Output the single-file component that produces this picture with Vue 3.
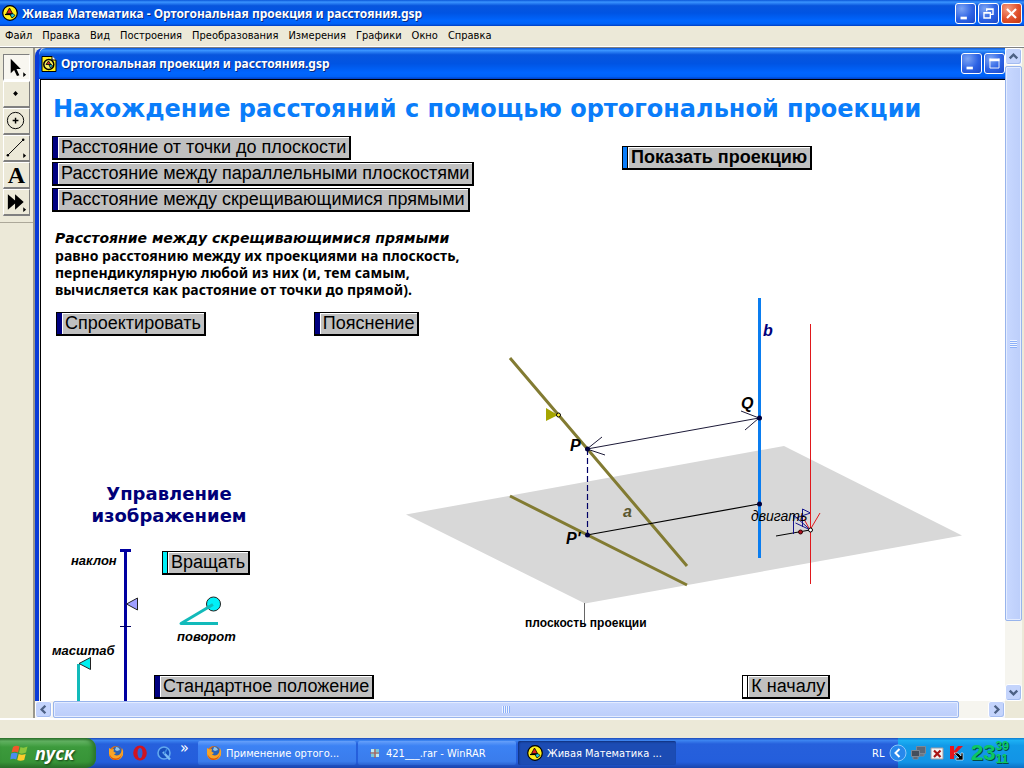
<script setup>
import { ref } from 'vue'

const title = 'Ортогональная проекция и расстояния.gsp'

const menu = ['Файл', 'Правка', 'Вид', 'Построения', 'Преобразования', 'Измерения', 'Графики', 'Окно', 'Справка']

const tools = [
  { id: 'arrow', label: 'Стрелка', more: true },
  { id: 'point', label: 'Точка' },
  { id: 'circle', label: 'Окружность' },
  { id: 'line', label: 'Отрезок', more: true },
  { id: 'text', label: 'Текст' },
  { id: 'custom', label: 'Инструменты', more: true },
]
const activeTool = ref('arrow')

const distances = [
  'Расстояние от точки до плоскости',
  'Расстояние между параллельными плоскостями',
  'Расстояние между скрещивающимися прямыми',
]

const tasks = [
  { id: 'firefox', label: 'Применение ортого...' },
  { id: 'rar', label: '421___.rar - WinRAR' },
  { id: 'math', label: 'Живая Математика ...' },
]
const activeTask = ref('math')
</script>

<template>
  <div class="screen">
    <svg class="defs" width="0" height="0" aria-hidden="true">
      <symbol id="math" viewBox="0 0 16 16">
        <circle cx="8" cy="8" r="7.3" fill="#ffef1c" stroke="#000" stroke-width="1.2" />
        <path d="M7.500 3 10.500 8.500H4.500Z" fill="#e02020" stroke="#000" stroke-width=".8" />
        <path d="M3 9.500H9" stroke="#000" stroke-width="1.200" />
        <path d="M8 9.500 11 8.500l2 2-3 2.500Z" fill="#20c8d8" stroke="#000" stroke-width=".8" />
      </symbol>
      <symbol id="firefox" viewBox="0 0 16 16">
        <circle cx="8" cy="8" r="7" fill="#e8720c" />
        <circle cx="9" cy="6" r="4.6" fill="#2a62b4" />
        <path d="M8 2q3 0 4 3l-3 1-2-1Z" fill="#8fc4ee" />
        <path d="M1 3 3.500 4.500 6 4 5.500 6.500 8 8 6 9.500q2 2 5 .5 3-2 3-7 2 3 1 7-2 5-7 5-6 0-7-6Z" fill="#f7a428" />
        <path d="M1.500 9q2 5 7 4.500 4-.5 5.500-5-1 6-6.500 6.500-5 0-6-6Z" fill="#d8520a" />
      </symbol>
    </svg>

    <header class="titlebar">
      <svg class="icon16"><use href="#math" /></svg>
      <span class="caption">Живая Математика - {{ title }}</span>
      <button class="winbtn" aria-label="Свернуть">
        <svg viewBox="0 0 21 21"><path d="M5 15.500h7" stroke="#fff" stroke-width="3" /></svg>
      </button>
      <button class="winbtn" aria-label="Восстановить">
        <svg viewBox="0 0 21 21"><path d="M8.500 8V5.500h7v6H13M8 6h8M5.500 9.500h7v6h-7ZM5 10h8" fill="none" stroke="#fff" stroke-width="1.500" /></svg>
      </button>
      <button class="winbtn close" aria-label="Закрыть">
        <svg viewBox="0 0 21 21"><path d="m5.500 5.500 10 10m0-10-10 10" stroke="#fff" stroke-width="2.400" /></svg>
      </button>
    </header>

    <nav class="menubar">
      <button v-for="item in menu" :key="item">{{ item }}</button>
    </nav>

    <main class="workspace">
      <aside class="palette">
        <div class="tools">
          <button v-for="tool in tools" :key="tool.id" :class="{ active: activeTool === tool.id }" :aria-label="tool.label" @click="activeTool = tool.id">
            <span v-if="tool.id === 'text'" class="letter">A</span>
            <svg v-else viewBox="0 0 26 25">
              <path v-if="tool.id === 'arrow'" d="M7 4v15l3.500-3.500 3 6.500 2.500-1-3-6.500h4.500Z" />
              <path v-else-if="tool.id === 'point'" d="m12 9.500 2.500 2.500-2.500 2.500L9.500 12Z" />
              <g v-else-if="tool.id === 'circle'">
                <circle cx="12" cy="12" r="8.500" fill="none" stroke="#000" />
                <path d="M12 9v6m-3-3h6" stroke="#000" stroke-width="1.500" />
              </g>
              <g v-else-if="tool.id === 'line'">
                <path d="M4 20 20 4" stroke="#000" />
                <circle cx="4" cy="20" r="1.300" /><circle cx="20" cy="4" r="1.300" />
              </g>
              <path v-else d="M4 4.500 11.500 11V4.500L20.500 12.500 11.500 20.500V14L4 20.500Z" />
              <path v-if="tool.more" d="M20 18v5l3-2.500Z" />
            </svg>
          </button>
        </div>
      </aside>

      <section class="document">
        <header class="doc-title">
          <svg class="icon16" viewBox="0 0 16 16">
            <path d="M1 .5h10l4 4v11H1Z" fill="#ffef1c" stroke="#000" />
            <path d="M11 0v4h4" fill="#fff" stroke="#000" />
            <circle cx="7.800" cy="8.500" r="5" fill="#f8f060" stroke="#000" stroke-width="1.500" />
            <path d="m7.500 5 2.500 3.500h-5Z" fill="#c33" stroke="#000" stroke-width=".8" />
            <path d="m8 9 2.500-.5 1 1.500L9.500 12Z" fill="#20c8d8" stroke="#000" stroke-width=".8" />
          </svg>
          <span class="caption">{{ title }}</span>
          <button class="winbtn" aria-label="Свернуть документ">
            <svg viewBox="0 0 21 21"><path d="M5 15.500h7" stroke="#fff" stroke-width="3" /></svg>
          </button>
          <button class="winbtn" aria-label="Развернуть документ">
            <svg viewBox="0 0 21 21"><path d="M5.500 5v10.500h10V5" fill="none" stroke="#fff" /><path d="M5 6.500h11" stroke="#fff" stroke-width="3" /></svg>
          </button>
        </header>

        <div class="canvas">
          <svg class="drawing" width="964" height="621" viewBox="41 80 964 621">
            <path d="M406 514.500 784 446 962 535.500 585 603.500Z" fill="#d8d8d8" />
            <path d="M584.500 603v23" stroke="#666" />
            <path d="m510 358 177 208M510 496l177 89" stroke="#827b32" stroke-width="3" />
            <path d="m587 535 172-31" stroke="#000" stroke-width="1.200" />
            <path d="M587.500 449v86" stroke="#000066" stroke-width="1.200" stroke-dasharray="6 3" />
            <path d="M759.500 298v260" stroke="#0a7df0" stroke-width="3" />
            <path d="m587 449 172-31M602 437l-15 12 18 6M741 411l18 7-14 12" fill="none" stroke="#1c1a38" />
            <path d="m776 536 34-6" stroke="#000" />
            <path d="m793.500 534v-19l17 15-15-7M802.500 527v-18l8 4-15 5" fill="none" stroke="#15158c" />
            <path d="M810.500 324v260M804 519l6 11 10-17" fill="none" stroke="#e0181c" />
            <path d="m546 408v13l12-6Z" fill="#a5a500" />
            <circle cx="558.500" cy="415" r="2" fill="#ffee30" stroke="#000" />
            <g fill="#00003c">
              <circle cx="587.500" cy="449" r="2.500" />
              <circle cx="587.500" cy="535" r="2.500" />
              <circle cx="759.500" cy="418" r="2.500" />
              <circle cx="759.500" cy="504" r="2.500" />
            </g>
            <circle cx="800.500" cy="532" r="2" fill="#b01020" stroke="#300" />
            <circle cx="810.500" cy="530" r="2" fill="#fff" stroke="#000" />
            <g class="point">
              <text x="570" y="451">P</text>
              <text x="566" y="544">P'</text>
              <text x="741" y="409">Q</text>
              <text x="763" y="336" fill="#00007c">b</text>
              <text x="623" y="517" fill="#5b5730">a</text>
            </g>
            <text x="751" y="521" class="move">двигать</text>
            <text x="525" y="627" class="plane">плоскость проекции</text>

            <path d="M125.500 549v152" stroke="#0000a0" stroke-width="3" />
            <path d="M120 550.500h11" stroke="#0000a0" stroke-width="3" />
            <path d="M120 626.500h11" stroke="#000060" />
            <path d="m126.500 604 11-6v12Z" fill="#a0a0ff" stroke="#222" />
            <path d="M78.500 664v37" stroke="#12baba" stroke-width="3" />
            <path d="m79 663.500 11.500-6v12Z" fill="#00f0f0" stroke="#222" />
            <circle cx="213.500" cy="604" r="7" fill="#00f0f8" stroke="#222" />
            <path d="m213 604.500-32 19h37" fill="none" stroke="#12baba" stroke-width="3" stroke-linejoin="round" />
            <text x="71" y="565" class="small">наклон</text>
            <text x="52" y="655" class="small">масштаб</text>
            <text x="177" y="641" class="small">поворот</text>
          </svg>

          <h1>Нахождение расстояний с помощью ортогональной проекции</h1>
          <div class="actions">
            <div class="distances">
              <button v-for="item in distances" :key="item" class="sketch-btn"><span>{{ item }}</span></button>
            </div>
            <button class="sketch-btn blue bold"><span>Показать проекцию</span></button>
          </div>
          <p class="theory">
            <em>Расстояние между скрещивающимися прямыми</em><br>
            равно расстоянию между их проекциями на плоскость,<br>
            перпендикулярную любой из них (и, тем самым,<br>
            вычисляется как растояние от точки до прямой).
          </p>
          <div class="explain">
            <button class="sketch-btn"><span>Спроектировать</span></button>
            <button class="sketch-btn"><span>Пояснение</span></button>
          </div>
          <h2>Управление<br>изображением</h2>
          <button class="sketch-btn cyan rotate"><span>Вращать</span></button>
          <div class="position">
            <button class="sketch-btn"><span>Стандартное положение</span></button>
            <button class="sketch-btn white"><span>К началу</span></button>
          </div>
        </div>
      </section>

      <div class="scroll vertical">
        <button aria-label="Вверх"><svg viewBox="0 0 16 16"><path d="m4 10 4-4 4 4" /></svg></button>
        <div class="track"><div class="thumb"><i></i></div></div>
        <button aria-label="Вниз"><svg viewBox="0 0 16 16"><path d="m4 6 4 4 4-4" /></svg></button>
      </div>
      <div class="scroll horizontal">
        <button aria-label="Влево"><svg viewBox="0 0 16 16"><path d="M10 4 6 8l4 4" /></svg></button>
        <div class="track"><div class="thumb"><i></i></div></div>
        <button aria-label="Вправо"><svg viewBox="0 0 16 16"><path d="m6 4 4 4-4 4" /></svg></button>
      </div>
    </main>

    <div class="statusbar"></div>

    <footer class="taskbar">
      <button class="start">
        <svg viewBox="0 0 20 18">
          <path d="M3 3q3-2 6.500-.5L8 8.500Q5 7 1.500 8.500Z" fill="#f0582a" />
          <path d="M10.500 3q3 1.500 7-.5L16 8.500q-4 2-7 .5Z" fill="#8cc63c" />
          <path d="M1.200 9.500q3-1.500 6.500 0l-1.500 6q-3-1.500-6 0Z" fill="#4a8cf0" />
          <path d="M8.700 10q3 1.500 7 0l-1.500 6q-4 1.500-7 0Z" fill="#fccc2c" />
        </svg>
        <span>пуск</span>
      </button>
      <div class="quick">
        <button aria-label="Firefox"><svg class="icon16"><use href="#firefox" /></svg></button>
        <button aria-label="Opera">
          <svg class="icon16" viewBox="0 0 16 16">
            <ellipse cx="8" cy="8" rx="6.800" ry="7.500" fill="#d01420" />
            <ellipse cx="8" cy="8" rx="2.500" ry="5.300" fill="#2e62d6" />
          </svg>
        </button>
        <button aria-label="QuickTime">
          <svg class="icon16" viewBox="0 0 16 16">
            <circle cx="8" cy="8" r="6" fill="#164fbe" stroke="#62a8ee" stroke-width="1.600" />
            <path d="m7 7 7 7.500" stroke="#7cbcf4" stroke-width="2.400" />
            <path d="m8 9 3-5" stroke="#3c86e0" stroke-width="1.500" />
          </svg>
        </button>
        <button class="more" aria-label="Ещё">»</button>
      </div>
      <div class="tasks">
        <button v-for="task in tasks" :key="task.id" :class="{ active: activeTask === task.id }" @click="activeTask = task.id">
          <svg v-if="task.id !== 'rar'" class="icon16"><use :href="'#' + task.id" /></svg>
          <svg v-else class="icon16" viewBox="0 0 16 16">
            <path d="M5 4h8v8H5Z" fill="#7cc8d8" />
            <path d="M5 4h3v3H5ZM10 9h3v3h-3Z" fill="#c0e8f0" />
            <path d="M4 8h9M9 4v9" stroke="#b4584c" stroke-width="1.200" />
          </svg>
          <span>{{ task.label }}</span>
        </button>
      </div>
      <button class="lang">RL</button>
      <div class="tray">
        <button class="expand" aria-label="Показать значки">
          <svg viewBox="0 0 18 18">
            <circle cx="9" cy="9" r="8" fill="#2888ec" stroke="#8cc8fa" />
            <path d="M10.500 5 6.500 9l4 4" fill="none" stroke="#fff" stroke-width="2" />
          </svg>
        </button>
        <svg class="icon16" viewBox="0 0 16 16">
          <path d="M6.500 1.500h9v7h-9ZM9 9h5v2H9Z" fill="#5c6878" stroke="#7c8896" />
          <path d="M1.500 5.500h8v6h-8ZM3 12h5v2H3Z" fill="#444e5c" stroke="#7c8896" />
        </svg>
        <svg class="icon16" viewBox="0 0 16 16">
          <path d="M2 3h12v11H2Z" fill="#f4f4f4" stroke="#9a9aa4" />
          <path d="m5 5.500 6.500 6.500m0-6.500L5 12" stroke="#a81414" stroke-width="2.200" />
        </svg>
        <svg class="icon16" viewBox="0 0 16 16">
          <path d="M2 1h4v5l4-5h5L8 8l3 3-5-1v4H2Z" fill="#e8141c" />
          <path d="M6 8h4l3 3V8h2v7H8v-2h3Z" fill="#000" stroke="#fff" stroke-width=".6" />
        </svg>
        <time class="clock"><span>23</span><span class="minutes"><span>39</span><span>11</span></span></time>
      </div>
    </footer>
  </div>
</template>

<style>
body {
  overflow: hidden;
  background: #ece9d8;
}
</style>

<style scoped>
.screen {
  display: flex;
  flex-direction: column;
  height: 100vh;
  font-family: "DejaVu Sans Condensed", "DejaVu Sans", sans-serif;
  font-size: 11px;
  color: #000;
}

.defs {
  position: absolute;
}

button {
  padding: 0;
  border: 0;
  background: none;
  font: inherit;
  color: inherit;
}

.icon16 {
  width: 16px;
  height: 16px;
  flex: none;
}

.titlebar,
.doc-title {
  display: flex;
  align-items: center;
  gap: 2px;
  color: #fff;
  background: linear-gradient(#0a56d8 0%, #3a94ff 8%, #0855dd 22%, #0054e3 50%, #0066ff 80%, #0062f6 92%, #003dc0 100%);
}

.titlebar {
  height: 26px;
  padding: 0 2px;
}

.doc-title {
  height: 31px;
  padding-left: 2px;
  border-top-left-radius: 7px;
}

.caption {
  flex: 1;
  padding-left: 2px;
  font-family: "Noto Sans", sans-serif;
  font-size: 12px;
  font-weight: bold;
  text-shadow: 1px 1px #0a2a80;
  white-space: nowrap;
}

.winbtn {
  width: 21px;
  height: 21px;
  flex: none;
  box-sizing: border-box;
  border: 1px solid #fff;
  border-radius: 3px;
  background: radial-gradient(circle at 30% 25%, #7ca4f4, #2c62e4 55%, #1a48c8);
}

.winbtn svg {
  display: block;
  width: 19px;
  height: 19px;
}

.winbtn.close {
  background: radial-gradient(circle at 30% 25%, #f49c80, #e0502c 55%, #c03810);
}

.menubar {
  display: flex;
  gap: 10px;
  height: 20px;
  padding: 0 5px;
  border-bottom: 1px solid #fff;
  background: #ece9d8;
}

.menubar button {
  height: 18px;
}

.workspace {
  flex: 1;
  min-height: 0;
  display: grid;
  grid-template-columns: 35px 1fr 17px;
  grid-template-rows: 1fr 17px;
  padding-right: 2px;
  border-top: 1px solid #808080;
  border-bottom: 1px solid #fff;
  background: #ece9d8;
}

.palette {
  grid-row: 1 / 3;
  box-sizing: border-box;
  border-right: 2px solid #9a978c;
}

.tools {
  display: flex;
  flex-direction: column;
  padding: 6px 3px;
  border-bottom: 1px solid #aca899;
}

.tools button {
  height: 27px;
  width: 27px;
  box-sizing: border-box;
  border: 1px solid #fff;
  border-right-color: #808080;
  border-bottom: 2px solid #808080;
}

.tools button.active {
  border-color: #808080 #fff #fff #808080;
  background: #f8f6f0;
}

.tools svg {
  display: block;
  width: 25px;
  height: 24px;
}

.letter {
  display: block;
  font: bold 24px/24px "Liberation Serif", serif;
}

.document {
  display: flex;
  flex-direction: column;
  min-width: 0;
  min-height: 0;
  border-left: 4px solid #0a3cd8;
  border-top-left-radius: 8px;
}

.canvas {
  position: relative;
  flex: 1;
  min-height: 0;
  overflow: hidden;
  margin-left: 1px;
  padding: 0 11px;
  border-top: 1px solid #000;
  border-left: 1px solid #000;
  background: #fff;
}

.drawing {
  position: absolute;
  top: 0;
  left: 0;
}

.canvas > :not(.drawing) {
  position: relative;
}

h1 {
  margin: 12px 0 10px;
  padding-left: 1px;
  font: bold 24px/34px "DejaVu Sans", sans-serif;
  color: #0a7dfa;
  white-space: nowrap;
}

.actions {
  display: flex;
  align-items: flex-start;
}

.distances {
  display: flex;
  flex-direction: column;
  align-items: flex-start;
  gap: 2px;
  width: 570px;
}

.actions > .sketch-btn {
  margin-top: 10px;
}

.sketch-btn {
  display: flex;
  height: 24px;
  box-sizing: border-box;
  border: 1px solid #000;
  border-right-width: 2px;
  border-bottom-width: 2px;
  background: #000080;
  font: 18px/19px "Liberation Sans", Arial, sans-serif;
  white-space: nowrap;
}

.sketch-btn span {
  margin-left: 5px;
  padding: 0 3px 0 2px;
  border-left: 1px solid #fff;
  border-top: 1px solid #fff;
  height: 20px;
  background: #c0c0c0;
}

.sketch-btn.blue {
  background: #0a7dfa;
}

.sketch-btn.cyan {
  background: #00f0f8;
}

.sketch-btn.white {
  background: #fff;
}

.sketch-btn.blue span,
.sketch-btn.cyan span,
.sketch-btn.white span {
  box-shadow: -1px 0 #000;
}

.sketch-btn.bold {
  font-weight: bold;
}

.theory {
  margin: 17px 0 0 3px;
  font: bold 14px/17px "Noto Sans", sans-serif;
  white-space: nowrap;
}

.theory em {
  font-family: "DejaVu Sans", sans-serif;
}

.explain {
  display: flex;
  gap: 108px;
  margin: 14px 0 0 4px;
}

h2 {
  width: 234px;
  margin: 147px 0 0;
  font: bold 18px/22px "DejaVu Sans", sans-serif;
  text-align: center;
  color: #000078;
}

.rotate {
  margin: 24px 0 0 110px;
}

.position {
  display: flex;
  gap: 368px;
  margin: 100px 0 0 102px;
}

.point {
  font: italic bold 16px "Liberation Sans", sans-serif;
}

.move {
  font: italic 14px "Liberation Sans", sans-serif;
}

.plane {
  font: bold 12px "Liberation Sans", sans-serif;
}

.small {
  font: italic bold 13px "Liberation Sans", sans-serif;
}

.scroll {
  display: flex;
  gap: 1px;
  background: #f6f5ef;
}

.vertical {
  flex-direction: column;
}

.horizontal {
  grid-column: 2;
}

.scroll button {
  width: 17px;
  height: 17px;
  flex: none;
  box-sizing: border-box;
  border: 1px solid #fff;
  border-radius: 3px;
  background: #c4d4fc;
  box-shadow: inset -1px -1px #a4bcf0;
}

.scroll button svg {
  display: block;
  width: 15px;
  height: 15px;
}

.scroll button path {
  fill: none;
  stroke: #4d6185;
  stroke-width: 2.5;
}

.track {
  flex: 1;
}

.thumb {
  display: flex;
  align-items: center;
  justify-content: center;
  box-sizing: border-box;
  border: 1px solid #98b4ec;
  border-radius: 2px;
  box-shadow: inset 0 0 0 1px #e4ecff;
}

.vertical .thumb {
  height: 90%;
  background: linear-gradient(90deg, #c8d8ff, #bccefa);
}

.horizontal .thumb {
  width: 97%;
  height: 17px;
  background: linear-gradient(#c8d8ff, #bccefa);
}

.vertical i {
  width: 7px;
  height: 8px;
  background: repeating-linear-gradient(#eef4ff 0 1px, #8cb0f8 1px 2px);
}

.horizontal i {
  width: 8px;
  height: 7px;
  background: repeating-linear-gradient(90deg, #eef4ff 0 1px, #8cb0f8 1px 2px);
}

.statusbar {
  height: 18px;
  border-top: 1px solid #fff;
  background: #ece9d8;
}

.taskbar {
  display: flex;
  height: 30px;
  color: #fff;
  background: linear-gradient(#1c48b8 0%, #3c84f0 8%, #2660dc 20%, #245edc 80%, #1a44ac 100%);
}

.start {
  display: flex;
  align-items: center;
  gap: 5px;
  width: 96px;
  padding-left: 10px;
  border-radius: 0 10px 10px 0;
  background: linear-gradient(#2c6c2c 0%, #64b464 10%, #3c9a3c 30%, #379437 80%, #2a6e2a 100%);
  box-shadow: inset -3px 0 4px #2a742a;
}

.start svg {
  width: 20px;
  height: 18px;
}

.start span {
  font: italic bold 18px "Open Sans", sans-serif;
  text-shadow: 1px 1px 2px #143c14;
}

.quick {
  display: flex;
  align-items: center;
  gap: 8px;
  width: 102px;
  box-sizing: border-box;
  padding-left: 12px;
}

.quick .icon16 {
  display: block;
}

.quick .more {
  padding-bottom: 12px;
  font-size: 16px;
}

.tasks {
  flex: 1;
  display: flex;
  gap: 2px;
  padding: 3px 0;
}

.tasks button {
  display: flex;
  align-items: center;
  gap: 4px;
  width: 158px;
  padding-left: 8px;
  border-radius: 2px;
  background: linear-gradient(#66a0fa, #3c82f4 20%, #3a7cec 85%, #2a62d0);
  white-space: nowrap;
}

.tasks button.active {
  padding-left: 9px;
  background: #1c4cb4;
  box-shadow: inset 1px 1px 2px #10307c;
}

.lang {
  width: 26px;
  text-align: left;
}

.tray {
  display: flex;
  align-items: center;
  gap: 3px;
  width: 126px;
  background: linear-gradient(#0c7cd0 0%, #1cb0f4 8%, #129ae8 25%, #1294e6 80%, #0c70c4 100%);
}

.tray .expand {
  width: 18px;
  height: 18px;
  margin-left: -9px;
}

.expand svg {
  display: block;
}

.clock {
  display: flex;
  align-items: center;
  margin-left: 4px;
  font: bold 22px "Liberation Sans", sans-serif;
  color: #0cc864;
  text-shadow: 1px 1px #044c44;
}

.minutes {
  display: flex;
  flex-direction: column;
  font-size: 12px;
  line-height: 13px;
}
</style>
